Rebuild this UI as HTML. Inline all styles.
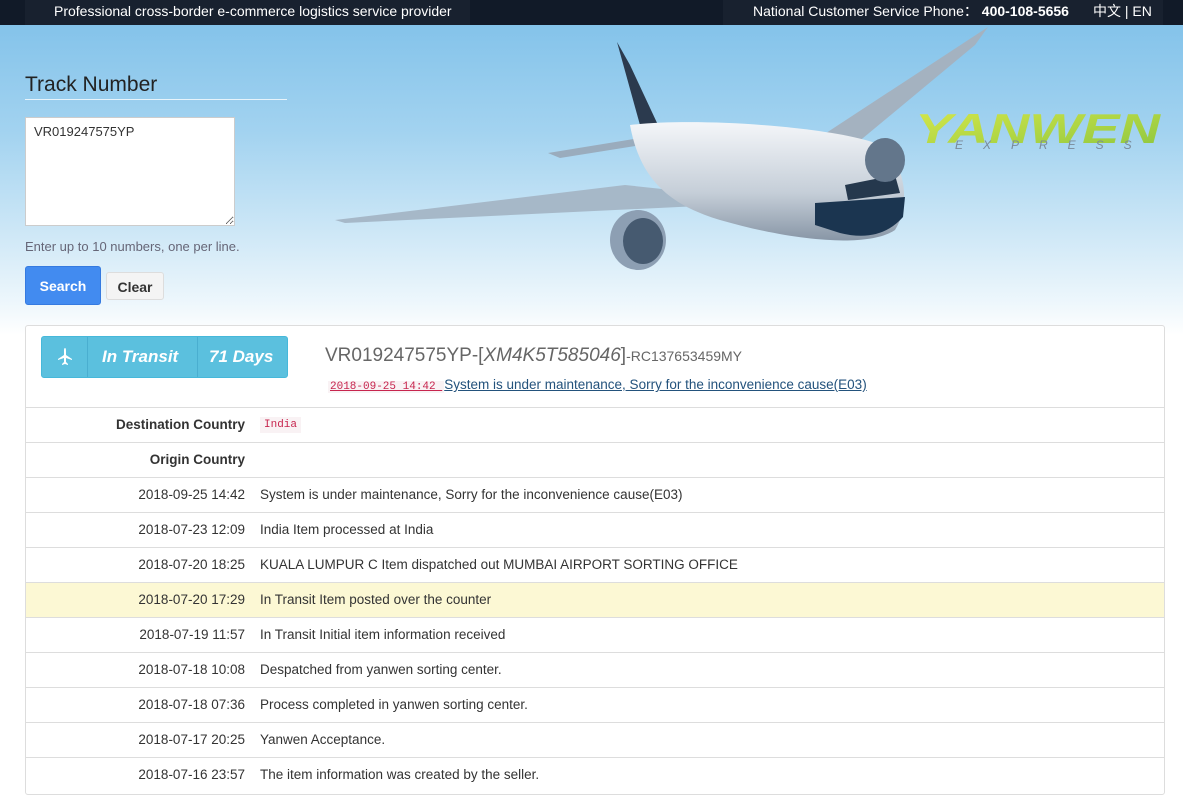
<!DOCTYPE html>
<html><head><meta charset="utf-8"><style>
*{margin:0;padding:0;box-sizing:border-box}
body{width:1183px;height:785px;overflow:hidden;font-family:"Liberation Sans","Noto Sans CJK SC",sans-serif;font-size:13px;color:#333;background:#fff;position:relative}
.top{position:absolute;left:0;top:0;width:1183px;height:25px;background:#111a28;color:#fff;font-size:14px}
.top .l{position:absolute;left:25px;top:0;width:445px;height:25px;background:#18212f;padding-left:29px;line-height:22px}
.top .r{position:absolute;left:723px;top:0;width:440px;height:25px;background:#18212f;line-height:22px;padding-left:30px}
.hero{position:absolute;left:0;top:25px;width:1183px;height:310px;background:linear-gradient(180deg,#84c3ea 0%,#a3d3f0 35%,#cbe6f6 65%,#eef7fc 90%,#fff 100%)}
h2{position:absolute;left:25px;top:73px;font-weight:normal;font-size:21px;color:#222;width:262px;border-bottom:1px solid #e8f4fb;padding-bottom:2px}
textarea{position:absolute;left:25px;top:117px;width:210px;height:109px;border:1px solid #ccc;font:13px "Liberation Sans",sans-serif;padding:6px 8px;color:#333;resize:both}
.hint{position:absolute;left:25px;top:239px;color:#667;font-size:13px}
.btn{position:absolute;top:266px;height:39px;border-radius:3px;font-weight:bold;font-size:14px;text-align:center;line-height:39px}
.card{position:absolute;left:25px;top:325px;width:1140px;height:470px;background:#fff;border:1px solid #ddd;border-radius:3px}
.badge{position:absolute;left:15px;top:10px;width:247px;height:42px;background:#5bc0de;border:1px solid #46b8da;border-radius:3px;color:#fff;font-style:italic;font-weight:bold;font-size:17px}
.badge span{position:absolute;top:10px}
.sep{position:absolute;top:0;width:1px;height:40px;background:#4aaed0}
.row{position:absolute;left:0;width:1138px;height:35px;border-top:1px solid #ddd;line-height:34px;font-size:13.5px}
.row .k{position:absolute;right:919px;font-weight:bold;color:#333}
.row .d{position:absolute;right:919px;color:#333}
.row .v{position:absolute;left:234px;color:#333}
</style></head><body>
<div class="top"><div class="l">Professional cross-border e-commerce logistics service provider</div><div class="r">National Customer Service Phone： <b>400-108-5656</b><span style="position:absolute;left:370px">中文 | EN</span></div></div>
<div class="hero">
<svg width="1183" height="310" style="position:absolute;left:0;top:0">
<defs><linearGradient id="f" x1="0" y1="0" x2="0" y2="1"><stop offset="0" stop-color="#f4f6f9"/><stop offset="0.6" stop-color="#c5ced8"/><stop offset="1" stop-color="#8896a6"/></linearGradient>
<linearGradient id="y" x1="0" y1="0" x2="1" y2="1"><stop offset="0" stop-color="#d8e84a"/><stop offset="1" stop-color="#8cc63f"/></linearGradient></defs>
<path d="M335,195 L625,160 L700,168 L720,180 L345,198Z" fill="#a6b8c8"/>
<path d="M548,128 L720,100 L730,106 L560,133Z" fill="#9aacbd"/>
<path d="M820,112 L988,2 L975,20 L845,128Z" fill="#a4b2c0"/>
<path d="M617,17 L640,100 L658,100 L630,40Z" fill="#2b3a4e"/>
<path d="M630,100 C700,92 830,102 875,118 C905,132 912,178 895,205 C870,222 800,218 720,195 C670,180 640,155 630,100Z" fill="url(#f)"/>
<path d="M815,178 L905,172 L903,192 Q880,218 840,208 L815,200Z" fill="#1b3550"/>
<path d="M845,160 L895,150 L900,168 L848,175Z" fill="#25384d"/>
<ellipse cx="638" cy="215" rx="28" ry="30" fill="#8d9fb3"/><ellipse cx="643" cy="216" rx="20" ry="23" fill="#465a70"/>
<ellipse cx="885" cy="135" rx="20" ry="22" fill="#63768b"/>
<text x="915" y="118" font-family="Liberation Sans" font-style="italic" font-weight="bold" font-size="42" fill="url(#y)" textLength="245" lengthAdjust="spacingAndGlyphs">YANWEN</text>
<text x="955" y="124" font-family="Liberation Sans" font-style="italic" font-size="12" fill="#7a8a99" letter-spacing="20">EXPRESS</text>
</svg>
</div>
<h2>Track Number</h2>
<textarea>VR019247575YP</textarea>
<div class="hint">Enter up to 10 numbers, one per line.</div>
<div class="btn" style="left:25px;width:76px;background:#428bf0;color:#fff;border:1px solid #357ae0">Search</div>
<div class="btn" style="left:106px;top:272px;height:28px;line-height:28px;width:58px;background:#f4f4f4;border:1px solid #ddd;color:#333">Clear</div>
<div class="card">
<div class="badge"><svg style="position:absolute;left:16px;top:11px" width="14" height="18" viewBox="0 0 14 18"><path d="M7,0 C8,0 8,2 8,4 L8,7 L14,11 L14,12 L8,10 L8,14 L10,16 L10,17 L7,16 L4,17 L4,16 L6,14 L6,10 L0,12 L0,11 L6,7 L6,4 C6,2 6,0 7,0Z" fill="#fff"/></svg><div class="sep" style="left:45px"></div><span style="left:60px">In Transit</span><div class="sep" style="left:155px"></div><span style="left:167px">71 Days</span></div>
<div style="position:absolute;left:299px;top:19px;font-size:19px;color:#666">VR019247575YP-[<i>XM4K5T585046</i>]<span style="font-size:14px">-RC137653459MY</span></div>
<div style="position:absolute;left:302px;top:51px;font-size:13.5px"><span style="font-family:'Liberation Mono',monospace;font-size:11px;color:#c7254e;background:#f9f2f4;text-decoration:underline;padding:0 2px">2018-09-25 14:42 </span> <span style="color:#23527c;text-decoration:underline">System is under maintenance, Sorry for the inconvenience cause(E03)</span></div>
<div class="row" style="top:81px"><span class="k">Destination Country</span><span class="v" style="font-family:'Liberation Mono',monospace;font-size:11px;color:#c7254e;"><span style="background:#f9f2f4;padding:2px 4px">India</span></span></div>
<div class="row" style="top:116px"><span class="k">Origin Country</span></div>
<div class="row" style="top:151px"><span class="d">2018-09-25 14:42</span><span class="v">System is under maintenance, Sorry for the inconvenience cause(E03)</span></div>
<div class="row" style="top:186px"><span class="d">2018-07-23 12:09</span><span class="v">India Item processed at India</span></div>
<div class="row" style="top:221px"><span class="d">2018-07-20 18:25</span><span class="v">KUALA LUMPUR C Item dispatched out MUMBAI AIRPORT SORTING OFFICE</span></div>
<div class="row" style="top:256px;background:#fcf8d4"><span class="d">2018-07-20 17:29</span><span class="v">In Transit Item posted over the counter</span></div>
<div class="row" style="top:291px"><span class="d">2018-07-19 11:57</span><span class="v">In Transit Initial item information received</span></div>
<div class="row" style="top:326px"><span class="d">2018-07-18 10:08</span><span class="v">Despatched from yanwen sorting center.</span></div>
<div class="row" style="top:361px"><span class="d">2018-07-18 07:36</span><span class="v">Process completed in yanwen sorting center.</span></div>
<div class="row" style="top:396px"><span class="d">2018-07-17 20:25</span><span class="v">Yanwen Acceptance.</span></div>
<div class="row" style="top:431px"><span class="d">2018-07-16 23:57</span><span class="v">The item information was created by the seller.</span></div>
</div>
</body></html>
